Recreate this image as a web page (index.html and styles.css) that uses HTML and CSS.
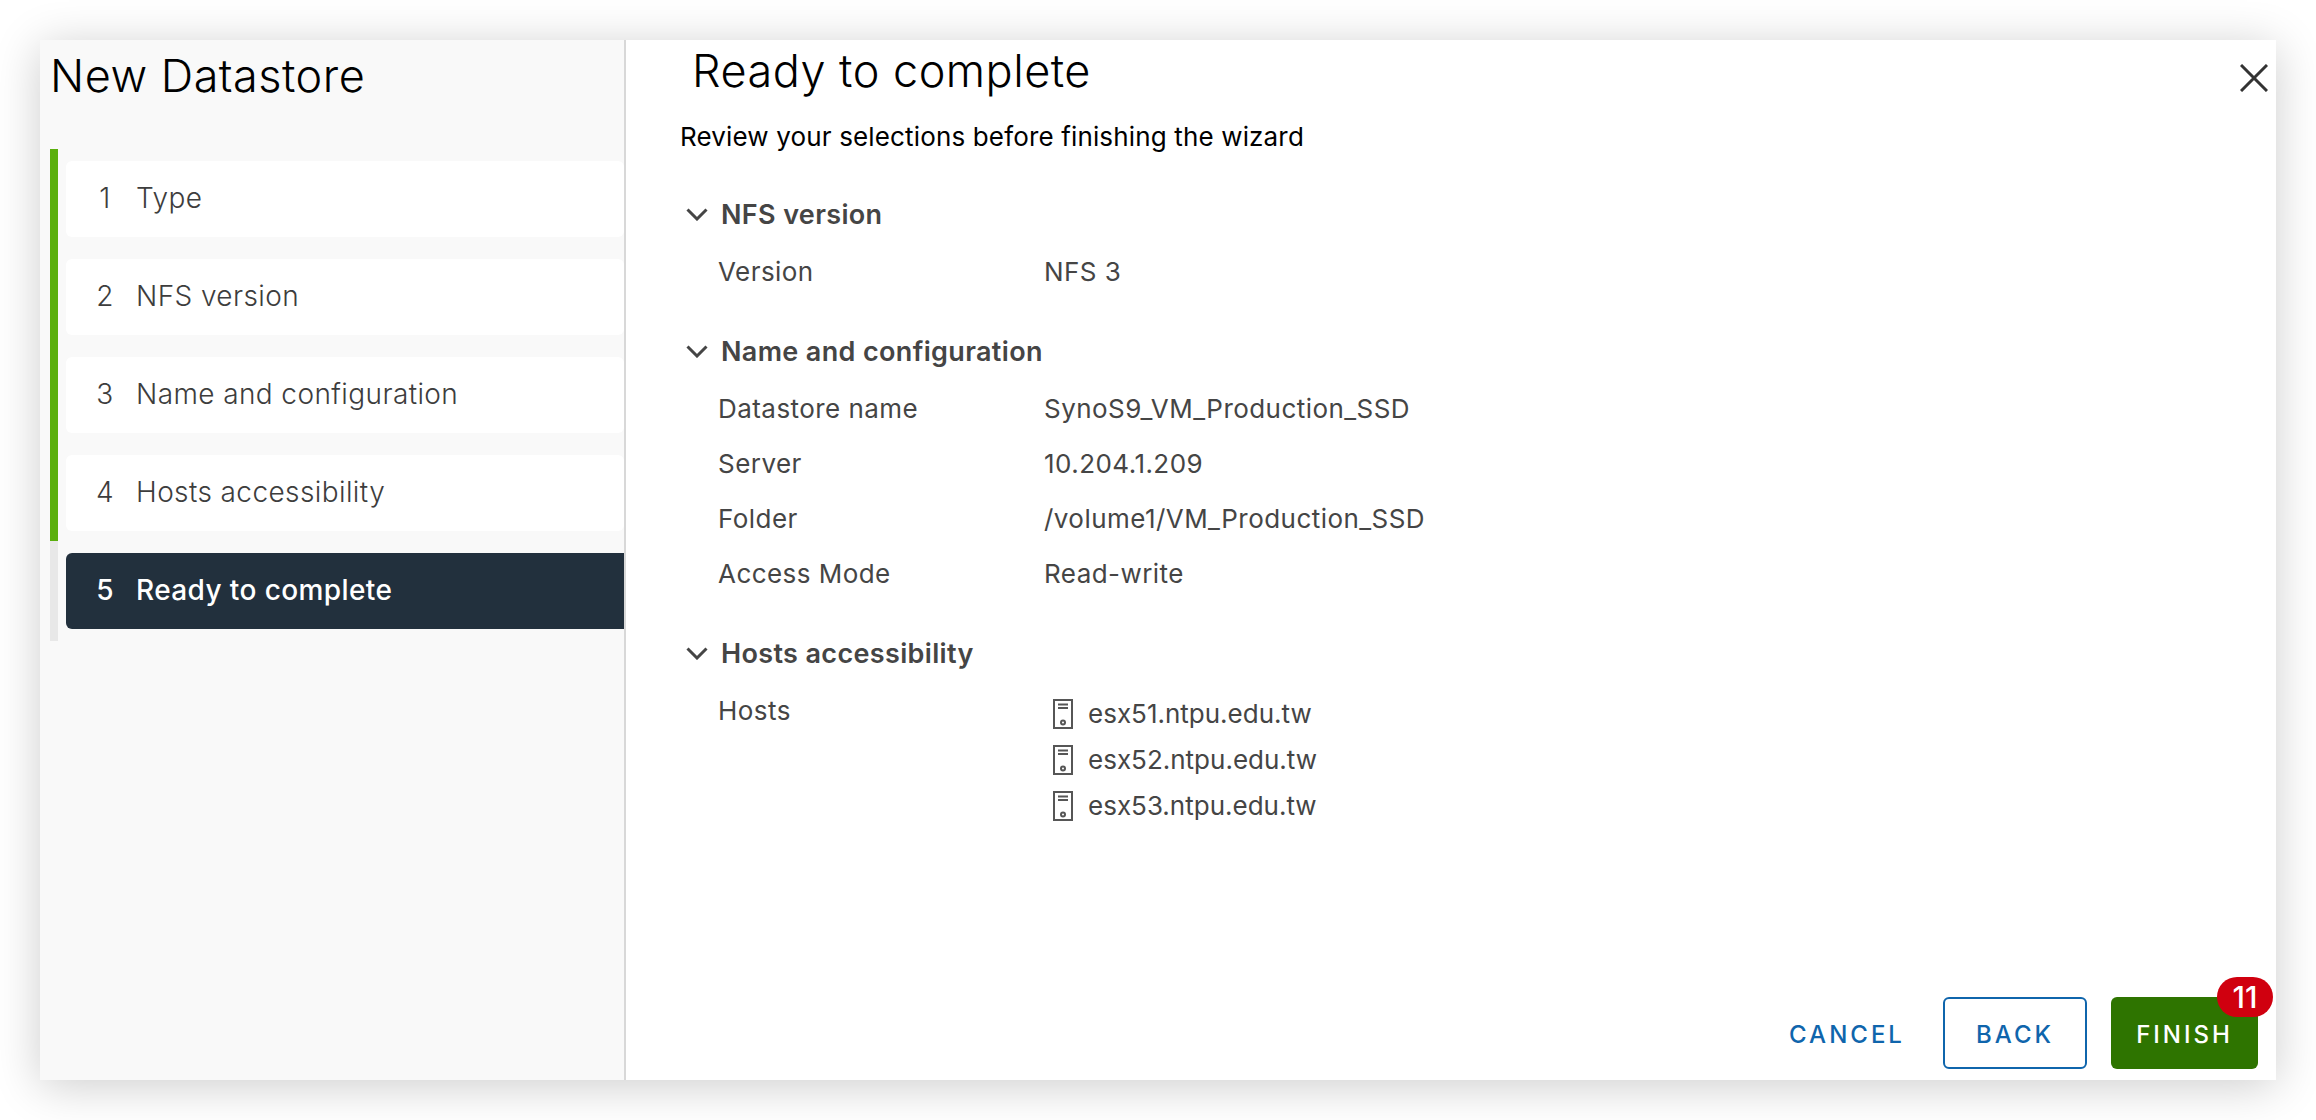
FILE: index.html
```html
<!DOCTYPE html>
<html lang="en">
<head>
    <meta charset="UTF-8" />
    <title>New Datastore</title>
    <link rel="stylesheet" href="styles.css">
</head>
<body>
<div class="modal">
    <aside class="sidebar">
        <h2 class="sidebar-title">New Datastore</h2>
        <ol class="steps">
            <li class="step done"><div class="step-box"><span class="step-num">1</span>Type</div></li>
            <li class="step done"><div class="step-box"><span class="step-num">2</span>NFS version</div></li>
            <li class="step done"><div class="step-box"><span class="step-num">3</span>Name and configuration</div></li>
            <li class="step done"><div class="step-box"><span class="step-num">4</span>Hosts accessibility</div></li>
            <li class="step current"><div class="step-box"><span class="step-num">5</span>Ready to complete</div></li>
        </ol>
    </aside>
    <main class="content">
        <svg class="close" viewBox="0 0 28 28"><path d="M1 1L27 27M27 1L1 27"/></svg>
        <h1 class="title">Ready to complete</h1>
        <p class="subtitle">Review your selections before finishing the wizard</p>

        <section class="section">
            <div class="section-head">
                <svg class="chevron" viewBox="0 0 22 13"><path d="M1.5 1.5L11 11L20.5 1.5"/></svg>
                NFS version
            </div>
            <div class="rows">
                <div class="row"><span>Version</span><span>NFS 3</span></div>
            </div>
        </section>

        <section class="section">
            <div class="section-head">
                <svg class="chevron" viewBox="0 0 22 13"><path d="M1.5 1.5L11 11L20.5 1.5"/></svg>
                Name and configuration
            </div>
            <div class="rows">
                <div class="row"><span>Datastore name</span><span>SynoS9_VM_Production_SSD</span></div>
                <div class="row"><span>Server</span><span>10.204.1.209</span></div>
                <div class="row"><span>Folder</span><span>/volume1/VM_Production_SSD</span></div>
                <div class="row"><span>Access Mode</span><span>Read-write</span></div>
            </div>
        </section>

        <section class="section">
            <div class="section-head">
                <svg class="chevron" viewBox="0 0 22 13"><path d="M1.5 1.5L11 11L20.5 1.5"/></svg>
                Hosts accessibility
            </div>
            <div class="rows">
                <div class="row">
                    <span>Hosts</span>
                    <ul class="hosts">
                        <li class="host">
                            <svg class="host-icon" viewBox="0 0 20 30"><rect x="1" y="1" width="18" height="28"/><path d="M5 5.5H15M5 9H15"/><circle cx="10" cy="23.5" r="2"/></svg>
                            esx51.ntpu.edu.tw
                        </li>
                        <li class="host">
                            <svg class="host-icon" viewBox="0 0 20 30"><rect x="1" y="1" width="18" height="28"/><path d="M5 5.5H15M5 9H15"/><circle cx="10" cy="23.5" r="2"/></svg>
                            esx52.ntpu.edu.tw
                        </li>
                        <li class="host">
                            <svg class="host-icon" viewBox="0 0 20 30"><rect x="1" y="1" width="18" height="28"/><path d="M5 5.5H15M5 9H15"/><circle cx="10" cy="23.5" r="2"/></svg>
                            esx53.ntpu.edu.tw
                        </li>
                    </ul>
                </div>
            </div>
        </section>

        <div class="footer">
            <button class="btn btn-link">CANCEL</button>
            <button class="btn btn-outline">BACK</button>
            <button class="btn btn-finish">FINISH<span class="badge">11</span></button>
        </div>
    </main>
</div>
</body>
</html>
```

FILE: styles.css
```css
* {
    box-sizing: border-box;
}
body {
    font-family: 'Inter', 'Lato', sans-serif;
    background: #ffffff;
    margin: 0;
    padding: 40px;
    height: 1120px;
    overflow: hidden;
    color: #454545;
}
.modal {
    display: flex;
    height: 1040px;
    background: #ffffff;
    box-shadow: 0 6px 44px rgba(0, 0, 0, 0.2);
}
.sidebar {
    width: 586px;
    flex: none;
    background: #f9f9f9;
    border-right: 2px solid #d8d8d8;
    padding-left: 10px;
}
.sidebar-title {
    margin: 0;
    height: 109px;
    font-size: 45px;
    font-weight: 300;
    letter-spacing: 0.5px;
    line-height: 71px;
    color: #000000;
}
.steps {
    list-style: none;
    margin: 0;
    padding: 0;
}
.step {
    border-left: 8px solid #5aaf0d;
    padding: 12px 0 10px 8px;
}
.step.current {
    border-left-color: #e8e8e8;
    padding-bottom: 12px;
}
.step-box {
    display: flex;
    align-items: center;
    height: 76px;
    padding: 0 0 2px 27px;
    background: #ffffff;
    border-radius: 6px;
    font-size: 28px;
    font-weight: 300;
    letter-spacing: 0.4px;
    color: #3d3d3d;
}
.current .step-box {
    background: #22303d;
    color: #ffffff;
    font-weight: 500;
    border-radius: 6px 0 0 6px;
}
.step-num {
    width: 24px;
    margin-right: 19px;
    text-align: center;
}
.content {
    position: relative;
    flex: 1;
    display: flex;
    flex-direction: column;
    padding-left: 54px;
}
.close {
    position: absolute;
    top: 24px;
    right: 8px;
    width: 28px;
    height: 28px;
    fill: none;
    stroke: #333333;
    stroke-width: 3;
}
.title {
    margin: 0 0 13px 12px;
    font-size: 45px;
    font-weight: 300;
    letter-spacing: 0.5px;
    line-height: 62px;
    height: 64px;
    color: #000000;
}
.subtitle {
    margin: 0 0 37px;
    font-size: 26px;
    font-weight: 400;
    letter-spacing: 0.15px;
    line-height: 40px;
    color: #000000;
}
.section {
    margin-bottom: 39px;
}
.section-head {
    display: flex;
    align-items: center;
    height: 40px;
    font-size: 27px;
    font-weight: 600;
    letter-spacing: 0.35px;
}
.chevron {
    width: 22px;
    height: 13px;
    margin: 0 13px 0 6px;
    fill: none;
    stroke: #454545;
    stroke-width: 3;
}
.rows {
    display: flex;
    flex-direction: column;
    gap: 15px;
    margin-top: 18px;
    padding-left: 38px;
}
.row {
    display: grid;
    grid-template-columns: 326px 1fr;
    font-size: 26px;
    font-weight: 400;
    letter-spacing: 0.45px;
    line-height: 40px;
}
.hosts {
    list-style: none;
    margin: 0;
    padding: 0;
    letter-spacing: 0;
}
.host {
    display: flex;
    align-items: center;
    height: 46px;
}
.host-icon {
    width: 20px;
    height: 30px;
    margin: 0 15px 0 9px;
    fill: none;
    stroke: #565656;
    stroke-width: 2;
}
.footer {
    position: absolute;
    right: 18px;
    bottom: 11px;
    display: flex;
    gap: 24px;
}
.btn {
    position: relative;
    height: 72px;
    padding-top: 3px;
    border: 2px solid transparent;
    border-radius: 6px;
    background: none;
    font-family: inherit;
    font-size: 24px;
    font-weight: 500;
    letter-spacing: 3px;
    color: #0f65ac;
}
.btn-link {
    width: 144px;
}
.btn-outline {
    width: 144px;
    border-color: #0f65ac;
}
.btn-finish {
    width: 147px;
    background: #2e7400;
    color: #ffffff;
}
.badge {
    position: absolute;
    top: -22px;
    right: -17px;
    width: 56px;
    height: 40px;
    border-radius: 20px;
    background: #d0000f;
    font-size: 30px;
    font-weight: 500;
    letter-spacing: 0;
    line-height: 40px;
    text-align: center;
}
```
